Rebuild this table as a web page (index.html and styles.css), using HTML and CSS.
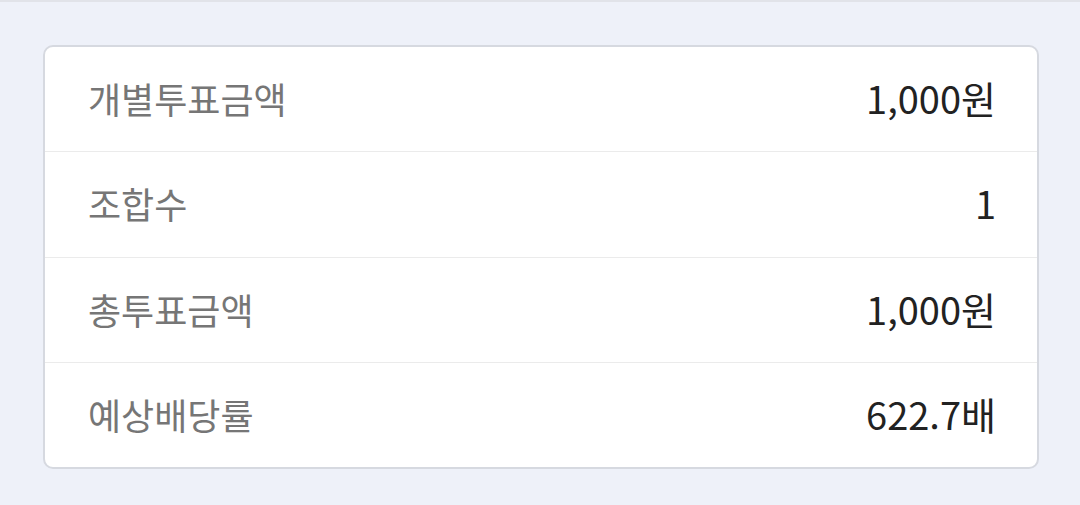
FILE: index.html
```html
<!DOCTYPE html>
<html lang="ko">
<head>
<meta charset="utf-8">
<link rel="stylesheet" href="styles.css">
</head>
<body>
<div class="page">
  <div class="card">
    <div class="row"><span class="label">개별투표금액</span><span class="value">1,000원</span></div>
    <div class="row"><span class="label">조합수</span><span class="value">1</span></div>
    <div class="row"><span class="label">총투표금액</span><span class="value">1,000원</span></div>
    <div class="row"><span class="label">예상배당률</span><span class="value">622.7배</span></div>
  </div>
</div>
</body>
</html>
```
FILE: styles.css
```css
html, body {
  margin: 0;
  padding: 0;
  background: #eef1f9;
}
body {
  font-family: "Noto Sans CJK KR", "Noto Sans", sans-serif;
}
.page {
  border-top: 2px solid #e1e3e9;
  padding: 43px 41px 0 43px;
}
.card {
  background: #fff;
  border: 2px solid #d6d9e0;
  border-radius: 10px;
  display: flex;
  flex-direction: column;
}
.row {
  height: 105px;
  box-sizing: border-box;
  display: flex;
  align-items: center;
  justify-content: space-between;
  padding: 0 41px 3px 43px;
  border-top: 1px solid #ebebeb;
  line-height: 1;
}
.row:first-child {
  border-top: none;
  height: 104px;
}
.row:nth-child(2) {
  height: 106px;
}
.label {
  color: #767676;
  font-size: 36px;
}
.value {
  color: #222;
  font-size: 38px;
}
```
